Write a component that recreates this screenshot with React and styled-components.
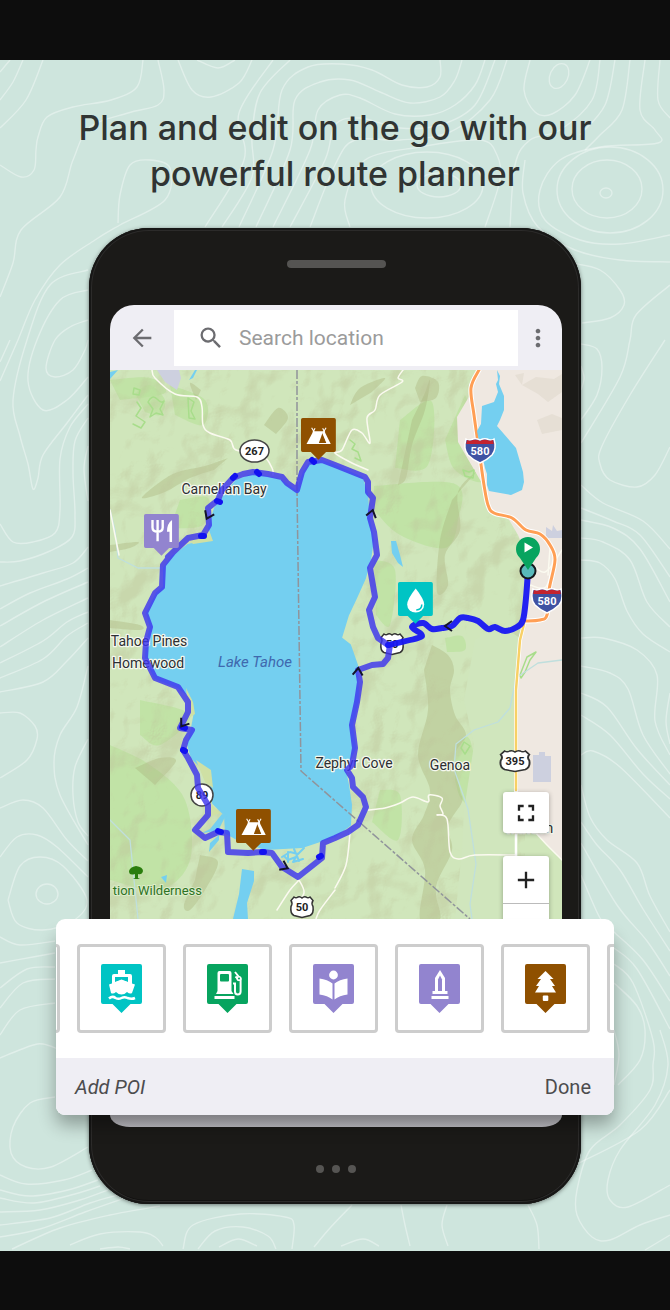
import React from 'react';
import styled, { createGlobalStyle } from 'styled-components';
import { MdAdd, MdArrowBack, MdFullscreen, MdMoreVert, MdRemove, MdSearch } from 'react-icons/md';

const GlobalStyle = createGlobalStyle`
  * { box-sizing: border-box; }
  body { margin: 0; background: #0d0d0d; }
  button, input { font: inherit; color: inherit; border: 0; padding: 0; margin: 0; background: none; }
  button { cursor: pointer; }
`;

const Page = styled.main`
  padding: 60px 0;
  font-family: Roboto, "Liberation Sans", sans-serif;
`;

const Poster = styled.section`
  position: relative;
  padding: 45px 56px 47px;
  background: #cee5dd;
  overflow: hidden;
`;

const Contours = styled.svg`
  position: absolute;
  inset: 0;
  width: 100%;
  height: 100%;
  fill: none;
  stroke: rgba(255, 255, 255, 0.38);
  stroke-width: 1.4;
`;

const Title = styled.h1`
  position: relative;
  margin: 0 auto 31px;
  max-width: 540px;
  font-family: Inter, "Liberation Sans", sans-serif;
  font-size: 34px;
  font-weight: 500;
  line-height: 46px;
  text-align: center;
  color: #303433;
`;

const Phone = styled.div`
  position: relative;
  display: flex;
  flex-direction: column;
  max-width: 492px;
  margin: 0 auto;
  padding: 32px 19px 31px 21px;
  border-radius: 60px;
  background: #1b1a18;
  box-shadow: inset 0 0 0 2px #171716, inset 0 0 0 3px #2c2b2a, inset 0 -4px 0 #131211, 0 1px 4px rgba(0, 0, 0, 0.5);
`;

const Earpiece = styled.div`
  width: 99px;
  height: 8px;
  margin: 0 auto 37px;
  border-radius: 4px;
  background: #555452;
`;

const SearchBar = styled.header`
  display: flex;
  align-items: center;
  height: 65px;
  border-radius: 24px 24px 0 0;
  background: #efeef4;
  color: #6c6c70;
`;

const BarButton = styled.button`
  display: flex;
  align-items: center;
  justify-content: center;
  width: ${(p) => p.$width}px;
  height: 56px;
`;

const MoreButton = styled(BarButton)`
  padding-right: 4px;
`;

const SearchBox = styled.label`
  display: flex;
  flex: 1;
  min-width: 0;
  align-items: center;
  gap: 14px;
  height: 56px;
  padding-left: 23px;
  background: #fff;
`;

const SearchInput = styled.input`
  flex: 1;
  min-width: 0;
  font-size: 21px;
  outline: 0;
  &::placeholder { color: #9b9b9b; opacity: 1; }
`;

const MapArea = styled.div`
  position: relative;
  height: 549px;
  overflow: hidden;
  background: #cfe5b9;
`;

const MapDrawing = styled.svg`
  display: block;
  width: 100%;
  height: 100%;
  font-family: Roboto, "Liberation Sans", sans-serif;
`;

const MapControls = styled.div`
  position: absolute;
  top: 422px;
  right: 13px;
  display: flex;
  flex-direction: column;
  gap: 23px;
  width: 46px;
`;

const ControlGroup = styled.div`
  border-radius: 3px;
  background: #fff;
  box-shadow: 0 1px 5px rgba(0, 0, 0, 0.3);
`;

const MapButton = styled.button`
  display: flex;
  align-items: center;
  justify-content: center;
  width: 100%;
  height: ${(p) => p.$height}px;
  color: #222;
  & + & { border-top: 1px solid #bbb; }
`;

const PoiPanel = styled.section`
  position: relative;
  z-index: 1;
  margin: 0 -52px 0 -54px;
  border-radius: 9px;
  overflow: hidden;
  background: #fff;
`;

const PanelShadow = styled.div`
  position: relative;
  z-index: 1;
  &::before {
    content: "";
    position: absolute;
    inset: 8px -52px 0 -54px;
    border-radius: 9px;
    box-shadow: 0 10px 18px rgba(0, 0, 0, 0.32);
  }
`;

const PoiStrip = styled.div`
  display: flex;
  justify-content: center;
  gap: 17px;
  padding: 25px 4px 25px 0;
  height: 139px;
  overflow: hidden;
`;

const PoiCard = styled.button`
  display: flex;
  flex: none;
  align-items: center;
  justify-content: center;
  width: 89px;
  height: 89px;
  border: 3px solid #cdcdcd;
  border-radius: 4px;
  background: #fff;
`;

const PanelFooter = styled.footer`
  display: flex;
  align-items: center;
  justify-content: space-between;
  height: 57px;
  padding: 0 23px 0 19px;
  background: #efeef4;
  color: #4c4c4e;
  font-size: 20px;
`;

const PanelTitle = styled.em`
  font-style: italic;
`;

const ScreenFoot = styled.div`
  height: 12px;
  border-radius: 0 0 20px 20px / 0 0 12px 12px;
  background: linear-gradient(#b3b2b8, #bfbec4);
`;

const NavDots = styled.div`
  display: flex;
  justify-content: center;
  gap: 8px;
  margin-top: 38px;
`;

const NavDot = styled.i`
  width: 8px;
  height: 8px;
  border-radius: 50%;
  background: #565553;
`;

const parse = (s) => s.trim().split(/\s+/).map((p) => p.split(',').map(Number));

// Turns "x,y x,y" into a smooth Catmull-Rom curve.
const smooth = (s) => {
  const p = parse(s);
  let d = `M${p[0]}`;
  for (let i = 0; i < p.length - 1; i += 1) {
    const a = p[i - 1] || p[i];
    const b = p[i];
    const c = p[i + 1];
    const e = p[i + 2] || c;
    d += `C${b[0] + (c[0] - a[0]) / 6},${b[1] + (c[1] - a[1]) / 6} ${c[0] - (e[0] - b[0]) / 6},${c[1] - (e[1] - b[1]) / 6} ${c}`;
  }
  return d;
};

const contourLines = [
  '43,60 26,100 0,128', '23,60 13,82 0,100', '10,60 0,72',
  '0,165 21,177 34,170 36,150 38,137 47,117 73,107 111,100 137,87 143,60',
  '158,60 164,90 158,105 128,113 90,127 73,160 60,197 21,230 13,263 0,297',
  '178,60 192,90 211,97 239,83 252,60', '197,60 218,68 235,60',
  '273,60 239,113 244,160 205,227', '290,60 260,93 252,137 252,177 222,227',
  '239,227 273,150 282,90 308,67 342,64 372,70 402,85 427,87 440,77 440,60',
  '256,227 290,150 295,100 320,82 350,80 380,92 410,103 440,97 455,80 462,60',
  '273,227 310,150 318,110 340,95 360,98 395,114 430,115 455,105 475,85 485,60',
  '290,227 325,160 335,125 360,118 400,128 440,125 475,105 495,60',
  '310,227 335,165 355,140 400,140 450,132 490,100 507,60',
  '530,60 524,90 535,112 552,114 575,95 590,60',
  '350,227 345,200 365,160 420,147 480,140 497,155 500,180 485,227',
  '600,60 592,100 560,130 530,140 515,165 510,227', '615,60 605,105 580,135', '630,60 622,110 600,135 585,150',
  '645,60 640,110 655,130 658,143 600,147 560,160 540,190 545,220 580,240 620,244 670,235',
  '660,60 658,100 670,118', '525,160 523,193 538,227 575,250 620,260 670,262',
  '571,263 600,270 620,290 624,305 610,318 582,323', '670,285 636,315 630,340 620,377 581,443',
  '118,223 120,195 130,165 150,160 170,168 165,200 120,225 95,240 60,265 35,300 18,340 0,381',
  '88,270 50,285 27,340 13,400 20,436 28,464 33,489 38,478 43,455 67,423 88,395',
  '88,290 60,300 37,340 28,381 43,410 67,400 88,377', '10,340 0,362',
  '88,320 70,327 55,340 46,368 55,377 73,370 85,350 88,340',
  '0,524 13,542 33,542 55,533 60,510 60,459 70,427 88,404',
  '0,562 20,561 50,551 72,537 75,514 73,473 75,441 88,418', '88,446 84,469 88,501',
  '0,586 43,573 73,563 88,547', '0,609 30,593 67,579 88,568', '0,626 43,602 88,582', '0,647 43,620 88,598',
  '0,663 43,641 67,622 88,612', '0,678 43,659 67,636 88,623', '0,692 43,682 67,661 88,638',
  '0,713 20,713 35,726 37,739 27,760 0,778', '88,666 77,707 60,735 54,762 60,795 88,845',
  '88,739 75,767 73,795 78,822 88,836', '0,808 23,800 43,808 67,840 88,861', '0,857 17,837 37,835 57,847 88,877',
  '8,900 20,866 40,857 63,866 87,900 73,921 43,930 17,923 8,900',
  '0,937 20,945 55,941', '0,963 33,957 55,953', '0,988 27,969 55,967', '0,1008 23,983 55,979',
  '0,1035 20,1010 55,1003', '0,1058 30,1046 43,1044 58,1049',
  '581,344 597,349 602,368 597,395 581,420', '581,366 584,378 581,390',
  '665,340 630,395 602,446 600,464 610,480 637,487 655,475 670,447',
  '581,485 603,503 643,521 670,549', '581,508 613,521 640,535 670,577', '581,520 613,528 640,549 670,602',
  '581,538 603,542 630,560 647,602 670,627', '581,560 600,563 615,579 627,611 643,634 670,652',
  '581,638 603,638 637,650 657,675 655,721 670,755', '670,693 666,721 670,744',
  '581,666 610,673 628,689 643,735 670,774', '581,693 607,707 637,749 670,785', '581,715 610,735 643,774 670,799',
  '581,755 593,751 620,767 670,818', '581,785 590,817 607,840 637,863 650,896 670,932',
  '581,822 597,845 620,870 643,909 670,951', '581,843 617,905 647,941 670,976',
  '581,875 600,918 614,932 643,960 670,1001', '614,948 637,969 670,1029',
  '614,964 633,983 653,1040 653,1065 650,1090 620,1125 590,1150 577,1190 577,1215 592,1237 610,1240 640,1225 670,1215',
  '614,983 637,1006 645,1030 640,1060 618,1085', '660,1030 668,1065 655,1105 620,1150 608,1180 610,1200 628,1207 670,1185',
  '614,1030 619,1055 614,1085', '670,1090 640,1130 575,1165', '645,1250 670,1235',
  '55,1097 30,1103 13,1127 11,1153 26,1167 51,1167 88,1147', '0,1175 26,1184 64,1180 92,1170',
  '0,1190 30,1196 68,1190 98,1180', '0,1198 34,1203 75,1194 100,1186', '0,1212 40,1210 80,1200 108,1190',
  '0,1225 50,1218 90,1203 118,1195', '0,1237 40,1229 85,1212 125,1198', '12,1249 60,1228 110,1215 160,1206',
  '70,1245 100,1234 140,1232 155,1237 163,1246', '100,1249 118,1247 130,1249',
  '183,1249 193,1225 240,1214 285,1217 294,1225 292,1249', '198,1249 215,1231 243,1227 268,1236 276,1249',
  '219,1247 238,1239 257,1246', '352,1205 330,1228 314,1247', '341,1246 363,1239 379,1246',
  '401,1205 405,1225 410,1246', '447,1205 442,1225 448,1246', '528,1205 537,1225 539,1249',
];

const contourRings = [
  [606, 193, 6, 5], [607, 189, 35, 29], [610, 190, 53, 43], [439, 185, 22, 12], [427, 185, 56, 33], [47, 894, 11, 10],
];

const PIN_COLORS = { teal: '#00c4c4', green: '#07a45f', purple: '#9284cf', brown: '#8f5000' };

// Every glyph is drawn on the 41 x 49 pin.
const glyphs = {
  ferry: (bg) => (
    <>
      <path d="M17 6h7v4h5q2 0 2 2v9H11v-9q0-2 2-2h4z" />
      <path d="M14 13h13v5l-6.500-2.500-6.500 2.500z" fill={bg} />
      <path d="M8 20.500l12.500-4.500 13.500 4.500-3 8.500q-2 1.500-5-1-2.500 2.500-5.500 2.500t-5.500-2.500q-3 2.500-5 1z" />
      <path d="M8 34.500q3.500-3 6.500-.5 3 1.500 6 0 3-1.500 6 0 4 1.500 7.500 0" fill="none" stroke="#fff" strokeWidth="2.500" />
    </>
  ),
  fuel: (bg) => (
    <>
      <path d="M10.500 9q0-2 2-2h10q2 0 2 2v18l2 3H9l1.500-3z" />
      <rect x="13" y="10" width="9" height="7.500" rx="1" fill={bg} />
      <path d="M7.500 32h20v3h-20z" />
      <path d="M26 19.500h2v8q0 3 2.800 3t2.800-3V15l-5.600-7M28.500 12.500l4 4" fill="none" stroke="#fff" strokeWidth="2" />
      <circle cx="32" cy="14.500" r="2.600" /><circle cx="32" cy="14.500" r="1" fill={bg} />
    </>
  ),
  book: () => (
    <>
      <circle cx="20.500" cy="11" r="4.400" />
      <path d="M6.500 14.500q8 1 13 5v16q-5-4-13-5zM34.500 14.500q-8 1-13 5v16q5-4 13-5z" />
    </>
  ),
  monument: (bg) => (
    <>
      <path d="M21 6l5 8v13h2.500v3h-15v-3H16V14z" />
      <path d="M21 11.500l2 4V27h-4V15.500z" fill={bg} />
      <path d="M12.500 32h17v3h-17z" />
    </>
  ),
  tree: () => (
    <>
      <path d="M20.500 7l8 8h-3.500l5 7h-3l4 6.500H10l4-6.500h-3l5-7h-3.500z" />
      <rect x="17.800" y="31.500" width="5.500" height="5.500" rx="1" />
    </>
  ),
  tent: (bg) => (
    <>
      <path d="M6.500 30.500L14.500 15.500h13L35 30.500z" />
      <path d="M25.500 17l4.500 12.500h-9z" fill={bg} />
      <path d="M25.500 17L31 30" stroke="#fff" strokeWidth="1.500" />
      <path d="M12.500 11.500l3 5M16.500 12l-2.500 5M29.500 11.500l-3 5M25.500 12l2.500 5" fill="none" stroke="#fff" strokeWidth="1.300" />
    </>
  ),
  food: () => (
    <>
      <path d="M10 7v9q0 5 6 5t6-5V7M16 7v25" fill="none" stroke="#fff" strokeWidth="2.800" />
      <path d="M33 7q-6 4-6 14h3v12h3z" />
    </>
  ),
  water: (bg) => (
    <>
      <path d="M20.800 7.500q10 12.500 10 19a10 9.500 0 0 1-20 0q0-6.500 10-19z" />
      <path d="M28 26.500q0 6-6.500 6.500" fill="none" stroke={bg} strokeWidth="1.800" />
    </>
  ),
};

function PinShape({ tone, glyph }) {
  const bg = PIN_COLORS[tone];
  return (
    <g>
      <path d="M2 0h37q2 0 2 2v36q0 2-2 2h-9.500l-9 9-9-9H2q-2 0-2-2V2q0-2 2-2z" fill={bg} />
      <g fill="#fff">{glyphs[glyph](bg)}</g>
    </g>
  );
}

const pois = [
  { name: 'Previous place' },
  { name: 'Ferry', tone: 'teal', glyph: 'ferry' },
  { name: 'Gas station', tone: 'green', glyph: 'fuel' },
  { name: 'Library', tone: 'purple', glyph: 'book' },
  { name: 'Monument', tone: 'purple', glyph: 'monument' },
  { name: 'Park', tone: 'brown', glyph: 'tree' },
  { name: 'Next place' },
];

const lake = '172,557 188,545 212,540 209,528 215,508 224,496 236,481 254,474 280,480 297,492 304,472 310,463 322,461 335,466 362,478 367,494 369,520 373,540 370,560 365,578 356,598 348,615 341,638 350,645 357,665 358,700 352,725 355,748 345,770 348,785 351,805 350,825 335,836 302,847 265,849 235,838 226,833 225,815 213,803 210,775 192,758 188,745 192,728 195,712 192,698 178,687 155,678 146,658 147,642 151,627 147,613 157,593 164,587 164,568';

const loop = '168,557 188,538 203,535 209,525 208,508 218,500 222,490 233,478 243,474 253,472 268,474 282,477 287,483 297,490 302,472 308,462 322,460 335,465 365,477 368,482 368,492 373,498 370,518 374,532 377,555 370,568 375,597 369,610 373,627 378,638 388,645 390,645 388,658 383,664 372,665 358,670 360,682 357,702 352,725 355,748 352,765 347,770 352,778 353,787 363,797 366,807 358,825 348,832 335,838 323,843 322,858 298,877 282,867 272,853 262,852 248,853 228,852 227,833 218,832 205,838 195,830 208,815 208,805 198,788 197,775 188,758 183,750 186,740 192,730 180,728 188,712 188,702 178,687 155,678 145,658 146,642 150,627 145,613 155,593 162,587 163,565 175,550';

const leg = '388,645 418,638 421,634 412,627 423,623 432,629 442,628 452,626 460,618 468,618 478,621 488,629 495,627 505,631 517,627 523,620 526,598 528,571';

const localRoads = [
  '152,370 155,378 175,394 197,397 202,407 203,425 210,433 230,440 236,450 262,455 272,468 273,475',
  '403,370 398,378 402,382 380,395 375,410 367,418 370,443 362,433 352,430 342,450 335,453 350,462 368,470',
  '368,810 385,808 400,803 413,797 428,802 429,795 442,798 440,806 443,814 437,815 447,819 450,852 459,859 475,855 516,855',
  '350,833 346,865 335,888', '299,880 304,893 294,907', '299,880 290,890 277,910', '335,890 320,910 316,919',
  '110,510 114,530 119,555', '535,832 548,846 562,860', '530,562 545,572 562,550',
  '530,585 546,587 553,560', '548,575 550,548',
];

const meadows = [
  '135,393 150,385 165,400 160,415 145,412', '170,385 205,400 203,425 175,415',
  '400,420 432,402 428,465 395,468', '374,486 455,484 458,520 445,548 400,535 374,510',
  '465,395 480,430 485,480 455,470 445,440', '445,638 462,636 465,650 447,652', '140,700 190,715 160,745 140,735',
  '110,745 150,765 185,800 190,860 160,890 110,880', '455,745 470,740 480,805 462,800 455,780',
  '374,560 395,570 390,625 376,615', '380,790 400,795 398,840 372,822', '180,500 208,498 203,525 170,528',
  '110,380 150,378 165,393 120,400',
];

const ridges = [
  '412,420 424,395 430,380 425,410 412,445 406,478 398,485', '415,388 422,376 438,382 436,398 420,402',
  '478,470 458,492 460,530 445,555 448,585 437,592 440,540 452,500',
  '432,645 448,655 454,670 450,690 455,715 466,735 455,755 460,790 462,802 448,826 452,850 438,880 436,895 440,919 420,919 425,870 412,840 424,815 430,790 418,755 428,710 424,670',
  '196,400 190,383 201,390', '228,458 205,466 178,472 160,482 142,498 165,492 190,478 214,470',
  '110,620 140,625 140,630 110,628', '110,545 138,542 130,548 110,552',
  '200,855 218,862 205,890 190,910 184,905 195,880', '135,768 160,758 176,761 155,785',
  '350,405 360,388 385,378 372,392', '264,425 278,408 288,418 276,434',
];

const stroked = { fill: 'none', strokeLinejoin: 'round', strokeLinecap: 'round' };

function Interstate({ x, y, label }) {
  return (
    <g transform={`translate(${x} ${y})`}>
      <path d="M-14-11q3 2 7 0 3-1 7 1 4-2 7-1 4 2 7 0 3 10-2 16-5 5-12 8-7-3-12-8-5-6-2-16z" fill="#3f52a3" stroke="#fff" strokeWidth="1.500" />
      <path d="M-13-10q3 1.500 6 0 3-1 7 1 4-2 7-1 3 1.500 6 0l.8 4h-27.600z" fill="#c4232f" />
      <text y="5" textAnchor="middle" fontSize="11" fontWeight="700" fill="#fff">{label}</text>
    </g>
  );
}

function UsShield({ x, y, label, wide }) {
  const k = wide ? 1.3 : 1;
  return (
    <g transform={`translate(${x} ${y})`}>
      <path
        transform={`scale(${k} 1)`}
        d="M-8-10q2 1.500 4 0 2-1 4 1 2-2 4-1 2 1.500 4 0l3 3.500q-2 3 0 6 1 7-3 9-4 1-8 2-4-1-8-2-4-2-3-9 2-3 0-6z"
        fill="#fff" stroke="#333" strokeWidth="1.500"
      />
      <text y="4" textAnchor="middle" fontSize="11" fontWeight="700" fill="#222">{label}</text>
    </g>
  );
}

const places = [
  { x: 224, y: 494, text: 'Carnelian Bay' },
  { x: 149, y: 646, text: 'Tahoe Pines' },
  { x: 148, y: 668, text: 'Homewood' },
  { x: 354, y: 768, text: 'Zephyr Cove' },
  { x: 450, y: 770, text: 'Genoa' },
  { x: 530, y: 833, text: 'Minden' },
];

const arrows = [[208, 516, 115], [372, 513, -75], [448, 626, 180], [358, 671, -85], [285, 867, 25], [183, 724, 125]];

const markers = [
  { x: 301, y: 418, tone: 'brown', glyph: 'tent' },
  { x: 144, y: 514, tone: 'purple', glyph: 'food' },
  { x: 398, y: 582, tone: 'teal', glyph: 'water' },
  { x: 236, y: 809, tone: 'brown', glyph: 'tent' },
];

function RouteMap() {
  return (
    <MapDrawing viewBox="110 370 452 549" preserveAspectRatio="xMidYMid slice" role="img" aria-label="Route around Lake Tahoe">
      <defs>
        <filter id="relief" x="0" y="0" width="100%" height="100%">
          <feTurbulence type="fractalNoise" baseFrequency="0.024 0.02" numOctaves="3" seed="11" />
          <feColorMatrix values="0 0 0 0 0  0 0 0 0 0  0 0 0 0 0  1 0 0 0 0" result="h" />
          <feDiffuseLighting in="h" surfaceScale="24" diffuseConstant="1" lightingColor="#fff">
            <feDistantLight azimuth="225" elevation="50" />
          </feDiffuseLighting>
          <feColorMatrix values="0 0 0 0 0.52  0 0 0 0 0.56  0 0 0 0 0.33  -1.2 0 0 0 0.9" />
        </filter>
      </defs>
      <rect x="110" y="370" width="452" height="549" fill="#d0e6bb" />
      {meadows.map((m) => <path key={m} d={`${smooth(m)}z`} fill="#b9e29b" opacity="0.65" />)}
      {ridges.map((r) => <path key={r} d={`${smooth(r)}z`} fill="#a5ae78" opacity="0.36" />)}
      <rect x="110" y="370" width="415" height="549" filter="url(#relief)" opacity="0.5" />
      <polygon points="475,640 500,625 520,638 517,919 455,919 462,850 464,810 474,745 464,700" fill="#d0e6bd" />
      <path d="M477,370 470,395 457,417 458,442 483,485 488,512 508,518 518,535 528,560 521,638 517,675 517,790 535,832 562,860V370z" fill="#efe8e1" />
      <path d="M522,385l14,-8 18,2 8,-5v18l-14,10-10-8z M537,420l15,-6 10,4v12l-20,4z M515,375l9,-2 -2,12z" fill="#e6dfd5" />
      <path d="M157,370l8,12 12,8 4,-12 -2,-8z M546,527l6,4 1,-6 4,6 5,-1v8h-16z M533,755l6,0v-3h6v4h6v26h-18z" fill="#cdd0df" />
      <path d="M134,388l6,2-1,5-6-1z M148,402q4,-8 9,-3t7,2l-4,8 3,6-7,-2-6,4 3,-8z M137,402l4,6-5,8 9,6-4,6-8,-4 M188,398l6,4-3,9 4,8-6,-1z M350,440l5,4-3,5 6,3 3,9-6,-3 M463,470l6,2 5,-2-1,8-8,-2z M464,742l6,4-5,8-4,-6z M521,678l-1,-3 7,-18 9,-5-6,8-5,12z" {...stroked} stroke="#a8dd8b" strokeWidth="1.500" />
      <path d="M472,919l-2,-15 6,-40-8,-55-14,-40 2,-25 18,-14 24,-8 12,-14 6,-30 22,-15 24,-3 M110,820l20,20 8,79 M110,510l5,20 3,28 20,10 25,0" {...stroked} stroke="#bfdfdd" strokeWidth="1.300" />
      {localRoads.map((r) => <path key={r} d={smooth(r)} {...stroked} stroke="#fbfaf0" strokeWidth="1.500" />)}
      <path d="M525,620 520,640 516,690 516,815" {...stroked} stroke="#fff" strokeWidth="4" />
      <path d="M525,620 520,640 516,690 516,790" {...stroked} stroke="#f8d066" strokeWidth="2.500" />
      <path d="M516,815V857" {...stroked} stroke="#fff" strokeWidth="2.500" />
      <g {...stroked}>
        {['#fff', '#ff9f55'].map((c, i) => (
          <path key={c} d={smooth('479,370 471,388 474,415 479,450 484,485 488,505 494,513 512,518 526,530 540,534 550,545 555,560 549,590 547,615 540,620 525,621')} stroke={c} strokeWidth={i ? 3 : 5} />
        ))}
      </g>
      <polygon points={lake} fill="#74cff0" stroke="#74cff0" strokeWidth="2" strokeLinejoin="round" />
      <path d="M209,530l4,11 -20,3 -4,-4z M186,688l7,14 2,12-6,4z M196,760l15,10 2,18-8,-6z M212,805l8,8-10,4z" fill="#cfe0a4" />
      <path d="M497,370l3,6-1,8 5,12v14l-4,10-3,6 19,22 7,24 1,10-2,8-11,5-22,-4-2,-6v-11l-2,-6-5,-22-3,-15 4,-7 1,-18 12,-4 4,-10-2,-8 2,-4z" fill="#74cff0" />
      <path d="M391,541l5,0 4,14 3,12-5,-4-6,-10z M242,869l12,2 0,10-7,22 1,16h-15l6,-25z M222,814l-12,15-8,4 16,-2 8,-16z M209,852l10,-12 0,-5-9,8z M161,877l6,-2-1,8z M118,370l-8,9v-7z M195,370l-6,10 4,-2 4,-8z" fill="#74cff0" />
      <path d="M282,857l8,-5 8,2 6,-6m-20,8l4,4 8,-3-3,5 10,-3M288,852v10M294,849l5,12" {...stroked} stroke="#74cff0" strokeWidth="2" />
      <path d="M297,370 297,490 301,771 470,919" fill="none" stroke="#90949b" strokeWidth="1.500" strokeDasharray="9 2 3 2" />
      {places.map((p) => (
        <text key={p.text} x={p.x} y={p.y} textAnchor="middle" fontSize="14" fill="#2c2f33" stroke="#f5f8ee" strokeWidth="2.500" paintOrder="stroke" strokeLinejoin="round">{p.text}</text>
      ))}
      <text x="255" y="667" textAnchor="middle" fontSize="15" fontStyle="italic" fill="#3f68ae">Lake Tahoe</text>
      <text x="202" y="895" textAnchor="end" fontSize="13" fill="#2d7224" stroke="#dcecc9" strokeWidth="2" paintOrder="stroke">tion Wilderness</text>
      <path d="M135,878v-4q-6,2-6,-3 1,-4 7,-5 7,1 7,5-1,4-5,3v4l2,1h-7z" fill="#2a7d0d" />
      <ellipse cx="254.500" cy="451" rx="14.500" ry="11" fill="#fff" stroke="#444" strokeWidth="1.500" />
      <text x="254.500" y="455" textAnchor="middle" fontSize="11" fontWeight="700" fill="#222">267</text>
      <circle cx="202" cy="795" r="11" fill="#fff" stroke="#444" strokeWidth="1.500" />
      <text x="202" y="799" textAnchor="middle" fontSize="11" fontWeight="700" fill="#222">89</text>
      <UsShield x={392} y={644} label="50" />
      <UsShield x={302} y={907} label="50" />
      <UsShield x={515} y={761} label="395" wide />
      <Interstate x={480} y={450} label="580" />
      <Interstate x={547} y={600} label="580" />
      <polyline points={loop} {...stroked} stroke="#3d35ee" strokeWidth="6" opacity="0.82" />
      <path d={smooth(leg)} {...stroked} stroke="#1717f2" strokeWidth="6" opacity="0.95" />
      <path d="M201,536l3,0 M217,501l3,1 M233,478l2,-2 M257,472l2,2 M312,460l2,2 M262,852h2 M218,831l3,1 M182,727l3,1 M183,750l2,1 M319,857l2,-1" {...stroked} stroke="#1212f0" strokeWidth="6" />
      {arrows.map(([x, y, a]) => (
        <path key={`${x}-${y}`} d="M-4,-5L3,0L-4,5" transform={`translate(${x} ${y}) rotate(${a})`} fill="none" stroke="#14142a" strokeWidth="2" />
      ))}
      {markers.map((m) => (
        <g key={`${m.x}-${m.y}`} transform={`translate(${m.x} ${m.y}) scale(0.85)`}>
          <PinShape tone={m.tone} glyph={m.glyph} />
        </g>
      ))}
      <circle cx="528" cy="571" r="7.500" fill="#58b9bb" stroke="#15181c" strokeWidth="2" />
      <path d="M528,570l-8,-12a12,12 0 1 1 16,0z" fill="#07a45f" />
      <path d="M524.500,542.500v10l8.500,-5z" fill="#fff" />
    </MapDrawing>
  );
}

export default function App() {
  return (
    <Page>
      <GlobalStyle />
      <Poster>
        <Contours viewBox="0 60 670 1191" preserveAspectRatio="xMidYMin slice" aria-hidden="true">
          {contourLines.map((line) => <path key={line} d={smooth(line)} />)}
          {contourRings.map(([cx, cy, rx, ry]) => <ellipse key={`${cx}-${rx}`} cx={cx} cy={cy} rx={rx} ry={ry} />)}
          <ellipse cx="559" cy="76" rx="9" ry="13" transform="rotate(25 559 76)" />
        </Contours>
        <Title>Plan and edit on the go with our powerful route planner</Title>
        <Phone>
          <Earpiece />
          <SearchBar>
            <BarButton $width={64} aria-label="Back"><MdArrowBack size={28} /></BarButton>
            <SearchBox>
              <MdSearch size={28} />
              <SearchInput type="text" placeholder="Search location" aria-label="Search location" />
            </SearchBox>
            <MoreButton $width={44} aria-label="More options"><MdMoreVert size={28} /></MoreButton>
          </SearchBar>
          <MapArea>
            <RouteMap />
            <MapControls>
              <ControlGroup>
                <MapButton $height={41} aria-label="Full screen"><MdFullscreen size={28} /></MapButton>
              </ControlGroup>
              <ControlGroup>
                <MapButton $height={47} aria-label="Zoom in"><MdAdd size={28} /></MapButton>
                <MapButton $height={47} aria-label="Zoom out"><MdRemove size={28} /></MapButton>
              </ControlGroup>
            </MapControls>
          </MapArea>
          <PanelShadow>
            <PoiPanel>
              <PoiStrip>
                {pois.map((poi) => (
                  <PoiCard key={poi.name} aria-label={poi.name}>
                    {poi.glyph && (
                      <svg width="41" height="49" viewBox="0 0 41 49">
                        <PinShape tone={poi.tone} glyph={poi.glyph} />
                      </svg>
                    )}
                  </PoiCard>
                ))}
              </PoiStrip>
              <PanelFooter>
                <PanelTitle>Add POI</PanelTitle>
                <button type="button">Done</button>
              </PanelFooter>
            </PoiPanel>
          </PanelShadow>
          <ScreenFoot />
          <NavDots><NavDot /><NavDot /><NavDot /></NavDots>
        </Phone>
      </Poster>
    </Page>
  );
}
